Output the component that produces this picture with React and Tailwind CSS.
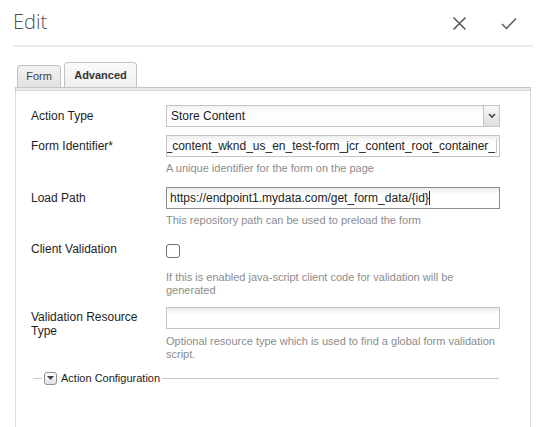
import React from "react";

const font = { fontFamily: '"Liberation Sans", Arial, sans-serif' };

function Field({ children, className = "" }) {
  return (
    <div
      className={
        "h-[22px] w-[334px] border bg-[linear-gradient(to_bottom,#ededed,#ffffff_7px)] flex items-center overflow-hidden " +
        className
      }
    >
      {children}
    </div>
  );
}

function Row({ label, children, labelClass = "leading-[22px]" }) {
  return (
    <div className="flex">
      <div className={"w-[135px] shrink-0 text-[12px] text-[#1e1e1e] " + labelClass}>{label}</div>
      <div className="flex flex-col">{children}</div>
    </div>
  );
}

function Help({ children, className = "" }) {
  return <div className={"text-[11px] leading-[13px] text-[#8c8c8c] w-[334px] " + className}>{children}</div>;
}

export default function App() {
  return (
    <div className="w-[542px] h-[427px] bg-white overflow-hidden flex flex-col" style={font}>
      {/* Header */}
      <div className="h-[45px] pl-[13px] pr-[25px] flex items-center justify-between">
        <div
          className="text-[20px] font-light text-[#4f4f4f] mt-[-2px]"
          style={{ fontFamily: '"Open Sans", "Liberation Sans", sans-serif' }}
        >
          Edit
        </div>
        <div className="flex items-center gap-[34px] mt-[1px]">
          <svg width="15" height="15" viewBox="0 0 15 15">
            <path d="M1.5 1.5 L13.5 13.5 M13.5 1.5 L1.5 13.5" stroke="#5a5a5a" strokeWidth="1.6" fill="none" />
          </svg>
          <svg width="16" height="13" viewBox="0 0 16 13">
            <path d="M1 7 L5.5 11.5 L15 1.5" stroke="#5a5a5a" strokeWidth="1.5" fill="none" />
          </svg>
        </div>
      </div>
      <div className="ml-[13px] mr-[9px] h-[2px] bg-[#ececec]" />

      {/* Tabs */}
      <div className="ml-[15px] mr-[11px] mt-[15px] flex flex-col flex-1">
        <div className="flex items-end pl-[2px] gap-[3px]">
          <div className="h-[22px] w-[44px] border border-b-0 border-[#c2c2c2] rounded-t-[4px] bg-[linear-gradient(to_bottom,#f2f2f2,#e2e2e2)] text-[11px] text-[#444] flex items-center justify-center">
            Form
          </div>
          <div className="h-[25px] w-[73px] border border-b-0 border-[#c2c2c2] rounded-t-[4px] bg-[linear-gradient(to_bottom,#fafafa,#eeeeee)] text-[11px] font-bold text-[#333] flex items-center justify-center">
            Advanced
          </div>
        </div>
        <div className="h-[3px] border-t border-l border-r border-[#c6c6c6] bg-[#ececec]" />
        <div className="flex-1 border-l border-r border-t border-[#dcdcdc] border-t-[#d6d6d6] bg-white pl-[15px] pt-[14px] flex flex-col">
          {/* Action Type */}
          <Row label="Action Type">
            <div className="h-[22px] w-[334px] border border-[#c4c4c4] bg-[linear-gradient(to_bottom,#f2f2f2,#ffffff_8px)] flex">
              <div className="flex-1 pl-[4px] text-[12px] leading-[20px] text-[#222]">Store Content</div>
              <div className="w-[16px] border-l border-[#c4c4c4] bg-[linear-gradient(to_bottom,#f8f8f8,#dedede)] flex items-center justify-center">
                <svg width="8" height="6" viewBox="0 0 8 6">
                  <path d="M1 1 L4 4 L7 1" stroke="#444" strokeWidth="1.6" fill="none" />
                </svg>
              </div>
            </div>
          </Row>

          {/* Form Identifier */}
          <div className="mt-[8px]">
            <Row label="Form Identifier*">
              <Field className="border-[#c4c4c4] justify-end pr-[2px]">
                <span className="whitespace-nowrap text-[12px] text-[#222]">
                  _content_wknd_us_en_test-form_jcr_content_root_container_
                </span>
                <span className="w-[1px] h-[14px] bg-[#c8c8c8] ml-[1px] shrink-0" />
              </Field>
              <Help className="mt-[5px]">A unique identifier for the form on the page</Help>
            </Row>
          </div>

          {/* Load Path */}
          <div className="mt-[12px]">
            <Row label="Load Path">
              <Field className="border-[#8c8c8c] pl-[3px]">
                <span className="whitespace-nowrap text-[12px] text-[#222]">
                  https://endpoint1.mydata.com/get_form_data/{"{id}"}
                </span>
                <span className="w-[1px] h-[14px] bg-[#222] shrink-0" />
              </Field>
              <Help className="mt-[5px]">This repository path can be used to preload the form</Help>
            </Row>
          </div>

          {/* Client Validation */}
          <div className="mt-[14px]">
            <Row label="Client Validation" labelClass="leading-[16px]">
              <div className="h-[20px] pt-[3px]">
                <div className="w-[14px] h-[14px] border border-[#6f6f6f] rounded-[3px] bg-white" />
              </div>
              <Help className="mt-[10px] leading-[12.5px]">
                If this is enabled java-script client code for validation will be generated
              </Help>
            </Row>
          </div>

          {/* Validation Resource Type */}
          <div className="mt-[10px]">
            <Row label={<>Validation Resource<br />Type</>} labelClass="leading-[14px] pt-[3px]">
              <Field className="border-[#c4c4c4]" />
              <Help className="mt-[6px]">
                Optional resource type which is used to find a global form validation script.
              </Help>
            </Row>
          </div>

          {/* Action Configuration */}
          <div className="mt-[10px] flex items-center pl-[2px] w-[468px]">
            <div className="w-[9px] h-[1px] bg-[#c8c8c8]" />
            <div className="ml-[2px] w-[13px] h-[13px] border border-[#8f8f8f] rounded-[3px] bg-[linear-gradient(to_bottom,#fdfdfd,#e2e2e2)] flex items-center justify-center">
              <svg width="7" height="4" viewBox="0 0 7 4">
                <path d="M0 0 L7 0 L3.5 4 Z" fill="#444" />
              </svg>
            </div>
            <div className="ml-[4px] text-[11px] leading-[14px] text-[#222]">Action Configuration</div>
            <div className="ml-[2px] flex-1 h-[1px] bg-[#c8c8c8]" />
          </div>
        </div>
      </div>
    </div>
  );
}
